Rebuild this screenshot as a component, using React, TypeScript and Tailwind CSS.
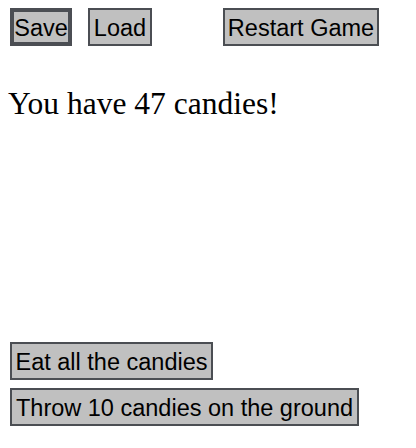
export default function App() {
  const btn =
    'h-[38px] bg-[#c0c0c0] border-2 border-[#4b4e53] text-[23.5px] leading-none text-black flex items-center justify-center whitespace-nowrap pt-[4px]'

  return (
    <div className="w-[416px] h-[448px] bg-white flex flex-col" style={{ fontFamily: '"Liberation Sans", Arial, sans-serif' }}>
      {/* Top controls */}
      <div className="flex items-start pt-[8px] pl-[10px]">
        <button className={`${btn} w-[62px] border-4`}>Save</button>
        <button className={`${btn} w-[64px] ml-[16px]`}>Load</button>
        <button className={`${btn} w-[156px] ml-[71px]`}>Restart Game</button>
      </div>

      <p className="mt-[40px] ml-[8px] text-[31.5px] leading-[36px] text-black" style={{ fontFamily: '"Liberation Serif", "Times New Roman", serif' }}>
        You have 47 candies!
      </p>

      {/* Actions */}
      <div className="flex flex-col items-start gap-[8px] mt-auto mb-[22px] pl-[10px]">
        <button className={`${btn} w-[203px]`}>Eat all the candies</button>
        <button className={`${btn} w-[349px]`}>Throw 10 candies on the ground</button>
      </div>
    </div>
  )
}
